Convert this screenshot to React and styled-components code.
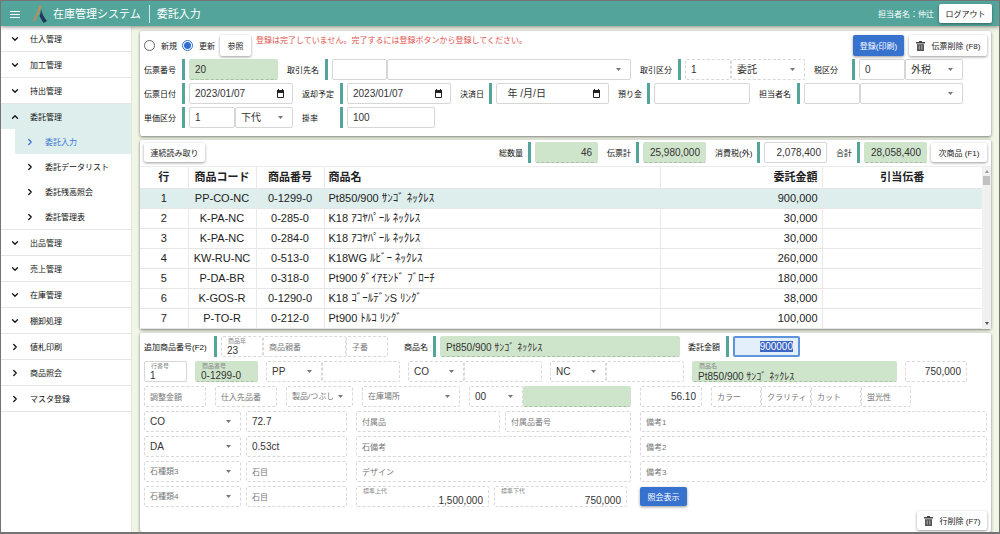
import React, { useEffect, useRef } from "react";
import styled, { createGlobalStyle, css } from "styled-components";
import { FiChevronDown, FiChevronRight, FiChevronUp } from "react-icons/fi";

const GlobalStyle = createGlobalStyle`
  * {
    box-sizing: border-box;
  }
  body {
    margin: 0;
    overflow: hidden;
    font-family: "Liberation Sans", "Noto Sans CJK JP", sans-serif;
    font-size: 8px;
    color: #222;
  }
  button, input, select {
    font-family: inherit;
    margin: 0;
  }
`;

const Frame = styled.div`
  display: flex;
  flex-direction: column;
  height: 100vh;
  border: 1px solid #747474;
  border-bottom-width: 2px;
  background: #fff;
  overflow: hidden;
`;

const Header = styled.header`
  display: flex;
  align-items: center;
  flex: none;
  height: 25px;
  padding: 0 7px 0 9px;
  background: #53a49a;
  color: #fff;
  box-shadow: 0 1px 4px rgba(0, 0, 0, 0.45);
  z-index: 1;
`;

const MenuButton = styled.button`
  display: flex;
  padding: 0;
  border: none;
  background: none;
  color: #fff;
  margin-right: 13px;
`;

const Logo = styled.svg`
  width: 15px;
  height: 19px;
  margin-right: 5px;
`;

const Title = styled.h1`
  margin: 0;
  font-size: 11px;
  font-weight: 400;
  line-height: 18px;
  padding-right: 8px;
  border-right: 1px solid #d5eae7;
`;

const PageName = styled.span`
  font-size: 11px;
  line-height: 18px;
  padding-left: 7px;
`;

const UserName = styled.span`
  margin-left: auto;
  margin-right: 5px;
`;

const Button = styled.button`
  display: inline-flex;
  align-items: center;
  justify-content: center;
  gap: 7px;
  flex: none;
  height: ${(props) => props.$height || 21}px;
  min-width: ${(props) => props.$width}px;
  padding: 0;
  border: none;
  border-radius: 2px;
  background: ${(props) => (props.$primary ? "#3872cf" : "#fff")};
  color: ${(props) => (props.$primary ? "#fff" : "#222")};
  font-size: 8px;
  white-space: nowrap;
  box-shadow: 0 1px 3px rgba(0, 0, 0, 0.4);
`;

const ReadButton = styled(Button)`
  margin-left: 4px;
`;

const Body = styled.div`
  display: flex;
  flex: 1;
  min-height: 0;
`;

const Sidebar = styled.nav`
  flex: none;
  width: 131px;
  border-right: 1px solid #e3e8dc;
  background: #fff;
`;

const MenuItem = styled.a`
  display: flex;
  align-items: center;
  gap: 10px;
  height: ${(props) => (props.$sub || props.$active ? 25 : 26)}px;
  margin-left: ${(props) => (props.$sub ? 14 : 0)}px;
  padding-left: ${(props) => (props.$sub ? 10 : 9)}px;
  border-bottom: ${(props) =>
    props.$sub || props.$active ? "none" : "1px solid #e4e4e4"};
  background: ${(props) => (props.$active ? "#deeeec" : "transparent")};
  color: ${(props) => (props.$current ? "#3b78d8" : "#111")};
  text-decoration: none;
`;

const SubMenu = styled.div`
  border-bottom: 1px solid #e4e4e4;
`;

const Main = styled.main`
  flex: 1;
  min-width: 0;
  display: flex;
  flex-direction: column;
  gap: 4px;
  padding: 5px 8px 0;
  background: #f0f5e6;
`;

const Panel = styled.section`
  display: flex;
  flex-direction: column;
  gap: ${(props) => props.$gap || 0}px;
  padding: ${(props) => props.$padding || "0"};
  flex: ${(props) => (props.$grow ? "1 0 auto" : "none")};
  border-radius: 2px;
  background: #fff;
  box-shadow: 0 1px 3px rgba(0, 0, 0, 0.5);
`;

const Row = styled.div`
  display: flex;
  align-items: center;
  gap: ${(props) => props.$gap || 9}px;
  padding-right: ${(props) => props.$right || 0}px;
`;

const Push = styled.span`
  margin-left: auto;
`;

const RadioLabel = styled.label`
  display: flex;
  align-items: center;
  gap: 6px;
`;

const Radio = styled.input`
  appearance: none;
  width: 11px;
  height: 11px;
  border: 1px solid #666;
  border-radius: 50%;
  background: #fff;

  &:checked {
    border-color: #2f6fd0;
    background: radial-gradient(#2f6fd0 0 3px, #fff 4px);
  }
`;

const Message = styled.p`
  align-self: flex-start;
  margin: 0;
  color: #e2544c;
  line-height: 12px;
`;

const Group = styled.div`
  display: flex;
  align-items: center;
  flex: ${(props) => (props.$grow ? "1 1 0" : "none")};
  min-width: 0;
`;

const Label = styled.label`
  display: flex;
  align-items: center;
  flex: none;
  width: ${(props) => props.$width || 34}px;
  box-sizing: content-box;
  height: 21px;
  padding-right: 4px;
  margin-right: 4px;
  border-right: 3px solid #53a49a;
  white-space: nowrap;
  color: #111;
`;

const Box = styled.div`
  display: flex;
  align-items: center;
  position: relative;
  flex: ${(props) => (props.$width ? `0 0 ${props.$width}px` : "1 1 0")};
  min-width: 0;
  height: 21px;
  border: 1px ${(props) => (props.$solid ? "solid #d6d6d6" : "dashed #d8d8d8")};
  border-radius: 2px;
  background: #fff;

  ${(props) =>
    props.$filled &&
    css`
      background: #cfe5cb;
      border-color: #cfe5cb #cfe5cb #a9c0a5;
    `}

  ${(props) =>
    props.$focused &&
    css`
      border: 2px solid #5d94dc;
      background: #e4effc;
    `}
`;

const textStyle = css`
  width: 100%;
  height: 19px;
  min-width: 0;
  border: none;
  outline: none;
  background: transparent;
  font-size: 10px;
  line-height: 15px;
  color: #333;
`;

const TextInput = styled.input`
  ${textStyle}
  padding: ${(props) => (props.$float ? "7px 5px 0" : "0 5px")};
  text-align: ${(props) => (props.$right ? "right" : "left")};

  &::placeholder {
    color: ${(props) => (props.$darkHint ? "#333" : "#777")};
    font-size: ${(props) => (props.$darkHint ? 10 : 8)}px;
    opacity: 1;
  }
  &::selection {
    background: #3c66c6;
    color: #fff;
  }
`;

const SelectInput = styled.select`
  ${textStyle}
  appearance: none;
  padding: 0 5px;
  font-size: ${(props) => (props.$hint ? 8 : 10)}px;
  color: ${(props) => (props.$hint ? "#777" : "#333")};
`;

const FloatLabel = styled.span`
  position: absolute;
  top: 0;
  left: 6px;
  font-size: 6px;
  line-height: 8px;
  color: #888;
`;

const Caret = styled.svg`
  flex: none;
  width: 5px;
  height: 3px;
  margin-right: 9px;
  fill: #777;
`;

const CalendarIcon = styled.svg`
  flex: none;
  width: 9px;
  height: 10px;
  margin-right: 7px;
`;

const TableArea = styled.div`
  display: flex;
  height: 163px;
  border-top: 1px solid #ececec;
`;

const Table = styled.table`
  flex: 1;
  height: 100%;
  table-layout: fixed;
  border-collapse: collapse;
  font-size: 11px;
`;

const Cell = styled.td`
  width: ${(props) => props.$width}px;
  padding: 0 4px;
  line-height: 15px;
  text-align: ${(props) => props.$align || "center"};
  border-bottom: 1px solid #e6e6e6;
  border-right: 1px solid #e9e9e9;
  white-space: nowrap;

  &:last-child {
    border-right: none;
  }
`;

const HeadRow = styled.tr`
  height: 21px;
`;

const TableRow = styled.tr`
  background: ${(props) => (props.$selected ? "#deeeec" : "#fff")};
`;

const ScrollTrack = styled.div`
  display: flex;
  flex-direction: column;
  align-items: center;
  width: 9px;
  padding: 3px 0 4px;
  background: #f1f1f1;
`;

const ScrollThumb = styled.div`
  width: 7px;
  height: 9px;
  margin: 3px 0 auto;
  background: #c1c1c1;
`;

const DetailGrid = styled.div`
  display: grid;
  grid-template-columns: 203fr 275fr 347fr;
  gap: 4px 9px;
  align-items: center;
`;

const Pair = styled.div`
  display: flex;
  gap: 5px;
  padding-right: ${(props) => props.$right || 0}px;
`;

const NameGroup = styled.div`
  display: flex;
  flex: 1;
  margin-left: 8px;
`;

const AmountGroup = styled.div`
  padding-right: 187px;
`;

const Footer = styled.div`
  display: flex;
  justify-content: flex-end;
`;

const Field = ({ label, width, solid, filled, date, right, ...rest }) => (
  <Box $width={width} $solid={solid} $filled={filled}>
    {label && <FloatLabel>{label}</FloatLabel>}
    <TextInput
      $float={!!label}
      $right={right}
      aria-label={label || rest.placeholder}
      {...rest}
    />
    {date && (
      <CalendarIcon viewBox="0 0 9 10">
        <path d="M1.500 2.500h6v6h-6z" fill="none" stroke="#222" />
        <path d="M1 1h7v3H1zM2 0h1v2H2zM6 0h1v2H6z" fill="#222" />
      </CalendarIcon>
    )}
  </Box>
);

const Select = ({ value, width, solid, hint, name }) => (
  <Box $width={width} $solid={solid}>
    <SelectInput $hint={hint} aria-label={name || value}>
      <option>{value}</option>
    </SelectInput>
    <Caret viewBox="0 0 5 3">
      <path d="M0 0h5L2.500 3z" />
    </Caret>
  </Box>
);

const Labeled = ({ id, text, width, grow, children }) => (
  <Group $grow={grow}>
    <Label htmlFor={id} $width={width}>
      {text}
    </Label>
    {children}
  </Group>
);

const TrashIcon = () => (
  <svg width="9" height="10" viewBox="0 0 9 10">
    <path d="M0 1h3V0h3v1h3v1.500H0z" fill="#444" />
    <path d="M1 3.200h7V10H1z" fill="#555" />
    <path d="M3.200 4.500v4M5.800 4.500v4" stroke="#ccc" strokeWidth="0.800" />
  </svg>
);

// the amount is selected on open so it can be typed over
const FocusedAmount = () => {
  const input = useRef(null);

  useEffect(() => {
    input.current.focus();
    input.current.select();
  }, []);

  return (
    <Box $width={67} $focused>
      <TextInput id="amount" ref={input} $right defaultValue="900000" />
    </Box>
  );
};

const menu = [
  { text: "仕入管理" },
  { text: "加工管理" },
  { text: "持出管理" },
  {
    text: "委託管理",
    open: true,
    children: ["委託入力", "委託データリスト", "委託残高照会", "委託管理表"],
  },
  { text: "出品管理" },
  { text: "売上管理" },
  { text: "在庫管理" },
  { text: "棚卸処理" },
  { text: "値札印刷", link: true },
  { text: "商品照会", link: true },
  { text: "マスタ登録", link: true },
];

const items = [
  ["PP-CO-NC", "0-1299-0", "Pt850/900 ｻﾝｺﾞ ﾈｯｸﾚｽ", "900,000"],
  ["K-PA-NC", "0-285-0", "K18 ｱｺﾔﾊﾟｰﾙ ﾈｯｸﾚｽ", "30,000"],
  ["K-PA-NC", "0-284-0", "K18 ｱｺﾔﾊﾟｰﾙ ﾈｯｸﾚｽ", "30,000"],
  ["KW-RU-NC", "0-513-0", "K18WG ﾙﾋﾞｰ ﾈｯｸﾚｽ", "260,000"],
  ["P-DA-BR", "0-318-0", "Pt900 ﾀﾞｲｱﾓﾝﾄﾞ ﾌﾞﾛｰﾁ", "180,000"],
  ["K-GOS-R", "0-1290-0", "K18 ｺﾞｰﾙﾃﾞﾝS ﾘﾝｸﾞ", "38,000"],
  ["P-TO-R", "0-212-0", "Pt900 ﾄﾙｺ ﾘﾝｸﾞ", "100,000"],
];

const MenuEntry = ({ item }) => {
  const Icon = item.link ? FiChevronRight : item.open ? FiChevronUp : FiChevronDown;

  return (
    <>
      <MenuItem href="#" $active={item.open}>
        <Icon size={10} strokeWidth={3} />
        {item.text}
      </MenuItem>
      {item.children && (
        <SubMenu>
          {item.children.map((text, i) => (
            <MenuItem key={text} href="#" $sub $active={i === 0} $current={i === 0}>
              <FiChevronRight size={10} strokeWidth={3} />
              {text}
            </MenuItem>
          ))}
        </SubMenu>
      )}
    </>
  );
};

const SlipForm = () => (
  <Panel $gap={3} $padding="4px 4px 8px">
    <Row $gap={5}>
      <RadioLabel>
        <Radio type="radio" name="mode" />
        新規
      </RadioLabel>
      <RadioLabel>
        <Radio type="radio" name="mode" defaultChecked />
        更新
      </RadioLabel>
      <Button $width={31}>参照</Button>
      <Message>登録は完了していません。完了するには登録ボタンから登録してください。</Message>
      <Push />
      <Button $width={51} $primary>
        登録(印刷)
      </Button>
      <Button $width={78}>
        <TrashIcon />
        伝票削除 (F8)
      </Button>
    </Row>
    <Row $right={24}>
      <Labeled id="slip" text="伝票番号">
        <Field id="slip" width={89} filled defaultValue="20" />
      </Labeled>
      <Labeled id="client" text="取引先名" grow>
        <Field id="client" width={55} solid />
        <Select name="取引先" value="" solid />
      </Labeled>
      <Labeled id="kind" text="取引区分">
        <Field id="kind" width={46} defaultValue="1" />
        <Select width={74} value="委託" />
      </Labeled>
      <Labeled id="tax" text="税区分">
        <Field id="tax" width={46} solid defaultValue="0" />
        <Select width={58} value="外税" solid />
      </Labeled>
    </Row>
    <Row $right={24}>
      <Labeled id="date" text="伝票日付">
        <Field id="date" width={104} solid date defaultValue="2023/01/07" />
      </Labeled>
      <Labeled id="back" text="返却予定">
        <Field id="back" width={104} solid date defaultValue="2023/01/07" />
      </Labeled>
      <Labeled id="settle" text="決済日" width={25}>
        <Field
          id="settle"
          width={113}
          solid
          date
          placeholder="  年 /月/日"
          $darkHint
        />
      </Labeled>
      <Labeled id="deposit" text="預り金" width={25} grow>
        <Field id="deposit" solid />
      </Labeled>
      <Labeled id="staff" text="担当者名">
        <Field id="staff" width={56} solid />
        <Select name="担当者" width={103} value="" solid />
      </Labeled>
    </Row>
    <Row>
      <Labeled id="unit" text="単価区分">
        <Field id="unit" width={46} solid defaultValue="1" />
        <Select width={58} value="下代" solid />
      </Labeled>
      <Labeled id="rate" text="掛率">
        <Field id="rate" width={88} solid defaultValue="100" />
      </Labeled>
    </Row>
  </Panel>
);

const ItemList = () => (
  <Panel $gap={3} $padding="2px 0 0">
    <Row $right={4}>
      <ReadButton $width={61} $height={19}>
        連続読み取り
      </ReadButton>
      <Push />
      <Labeled id="count" text="総数量" width={25}>
        <Field id="count" width={63} filled right defaultValue="46" />
      </Labeled>
      <Labeled id="slipTotal" text="伝票計" width={25}>
        <Field id="slipTotal" width={63} filled right defaultValue="25,980,000" />
      </Labeled>
      <Labeled id="taxTotal" text="消費税(外)" width={38}>
        <Field id="taxTotal" width={63} solid right defaultValue="2,078,400" />
      </Labeled>
      <Row $gap={4}>
        <Labeled id="total" text="合計" width={17}>
          <Field id="total" width={63} filled right defaultValue="28,058,400" />
        </Labeled>
        <Button $width={56} $height={19}>
          次商品 (F1)
        </Button>
      </Row>
    </Row>
    <TableArea>
      <Table>
        <thead>
          <HeadRow>
            <Cell as="th" $width={48}>行</Cell>
            <Cell as="th" $width={68}>商品コード</Cell>
            <Cell as="th" $width={68}>商品番号</Cell>
            <Cell as="th" $align="left">商品名</Cell>
            <Cell as="th" $width={162} $align="right">委託金額</Cell>
            <Cell as="th" $width={160}>引当伝番</Cell>
          </HeadRow>
        </thead>
        <tbody>
          {items.map(([code, number, name, amount], i) => (
            <TableRow key={number} $selected={i === 0}>
              <Cell>{i + 1}</Cell>
              <Cell>{code}</Cell>
              <Cell>{number}</Cell>
              <Cell $align="left">{name}</Cell>
              <Cell $align="right">{amount}</Cell>
              <Cell />
            </TableRow>
          ))}
        </tbody>
      </Table>
      <ScrollTrack>
        <svg width="4" height="3" viewBox="0 0 4 3">
          <path d="M0 3h4L2 0z" fill="#999" />
        </svg>
        <ScrollThumb />
        <svg width="4" height="3" viewBox="0 0 4 3">
          <path d="M0 0h4L2 3z" fill="#555" />
        </svg>
      </ScrollTrack>
    </TableArea>
  </Panel>
);

const ItemDetail = () => (
  <Panel $gap={4} $padding="3px 4px 0" $grow>
    <Row $gap={8}>
      <Labeled id="year" text="追加商品番号(F2)" width={66}>
        <Field id="year" label="商品年" width={42} defaultValue="23" />
        <Field width={83} placeholder="商品親番" />
        <Field width={42} placeholder="子番" />
      </Labeled>
      <NameGroup>
        <Labeled id="name" text="商品名" width={25} grow>
          <Field id="name" filled defaultValue="Pt850/900 ｻﾝｺﾞ ﾈｯｸﾚｽ" />
        </Labeled>
      </NameGroup>
      <AmountGroup>
        <Labeled id="amount" text="委託金額">
          <FocusedAmount />
        </Labeled>
      </AmountGroup>
    </Row>
    <Row $gap={8} $right={20}>
      <Field label="行番号" width={43} solid defaultValue="1" />
      <Field label="商品番号" width={63} filled defaultValue="0-1299-0" />
      {["PP", "CO", "NC"].map((code) => (
        <Group key={code}>
          <Select width={56} value={code} />
          <Field width={78} aria-label={`${code} 名称`} />
        </Group>
      ))}
      <Field label="商品名" filled defaultValue="Pt850/900 ｻﾝｺﾞ ﾈｯｸﾚｽ" />
      <Field width={62} right defaultValue="750,000" />
    </Row>
    <Row>
      <Field width={62} placeholder="調整金額" />
      <Field width={62} placeholder="仕入先品番" />
      <Select width={67} value="製品/つぶし" hint />
      <Select width={98} value="在庫場所" hint />
      <Group>
        <Select width={54} value="00" />
        <Field width={108} filled aria-label="在庫場所名" />
      </Group>
      <Field width={62} right defaultValue="56.10" />
      <Group>
        <Field width={50} placeholder="カラー" />
        <Field width={50} placeholder="クラリティ" />
        <Field width={50} placeholder="カット" />
        <Field width={50} placeholder="蛍光性" />
      </Group>
    </Row>
    <DetailGrid>
      <Pair>
        <Select width={97} value="CO" />
        <Field defaultValue="72.7" />
      </Pair>
      <Pair>
        <Field width={144} placeholder="付属品" />
        <Field placeholder="付属品番号" />
      </Pair>
      <Field placeholder="備考1" />
      <Pair>
        <Select width={97} value="DA" />
        <Field defaultValue="0.53ct" />
      </Pair>
      <Field placeholder="石備考" />
      <Field placeholder="備考2" />
      <Pair>
        <Select width={97} value="石種類3" hint />
        <Field placeholder="石目" />
      </Pair>
      <Field placeholder="デザイン" />
      <Field placeholder="備考3" />
      <Pair>
        <Select width={97} value="石種類4" hint />
        <Field placeholder="石目" />
      </Pair>
      <Pair $right={4}>
        <Field label="標準上代" right defaultValue="1,500,000" />
        <Field label="標準下代" right defaultValue="750,000" />
      </Pair>
      <Group>
        <Button $width={47} $height={19} $primary>
          照会表示
        </Button>
      </Group>
    </DetailGrid>
    <Footer>
      <Button $width={70} $height={19}>
        <TrashIcon />
        行削除 (F7)
      </Button>
    </Footer>
  </Panel>
);

const App = () => (
  <>
    <GlobalStyle />
    <Frame>
      <Header>
        <MenuButton aria-label="メニュー">
          <svg width="10" height="8" viewBox="0 0 10 8">
            <path d="M0 1.500h10M0 4.500h10M0 7.500h10" stroke="#fff" strokeWidth="1" />
          </svg>
        </MenuButton>
        <Logo viewBox="0 0 15 19">
          <path d="M7 0L8.500 3Q7 7 5 11L1 18L0 17Q4 9 7 0z" fill="#bd8f58" />
          <path d="M8 5Q9 11 14 17L10.500 19Q8 15 6.500 12Q8 9 8 5z" fill="#1f3a5a" />
        </Logo>
        <Title>在庫管理システム</Title>
        <PageName>委託入力</PageName>
        <UserName>担当者名：仲辻</UserName>
        <Button $width={53} $height={19}>
          ログアウト
        </Button>
      </Header>
      <Body>
        <Sidebar>
          {menu.map((item) => (
            <MenuEntry key={item.text} item={item} />
          ))}
        </Sidebar>
        <Main>
          <SlipForm />
          <ItemList />
          <ItemDetail />
        </Main>
      </Body>
    </Frame>
  </>
);

export default App;
